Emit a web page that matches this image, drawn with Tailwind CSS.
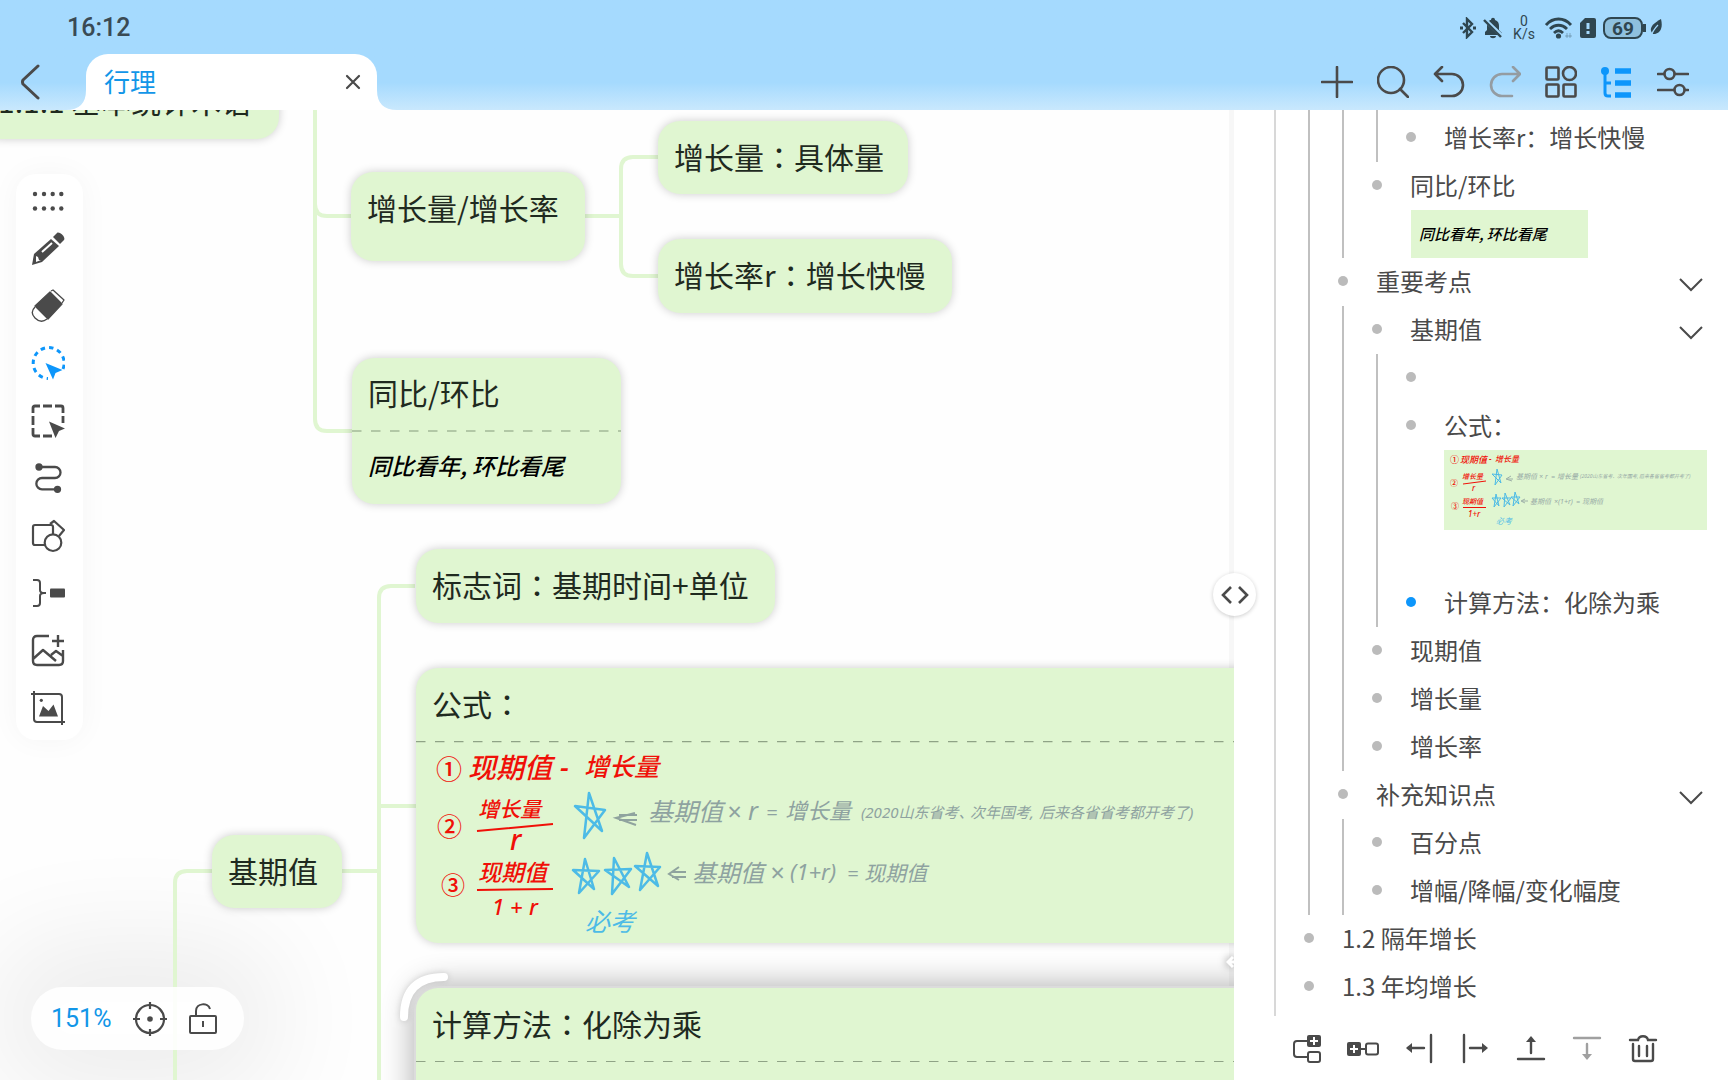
<!DOCTYPE html>
<html lang="zh-CN">
<head>
    <meta charset="UTF-8">
    <meta name="viewport" content="width=device-width, initial-scale=1.0">
    <title>行理</title>
    <script src="https://cdn.jsdelivr.net/npm/@tailwindcss/browser@4"></script>
</head>
<body class="h-screen flex flex-col overflow-hidden bg-white text-[#4a4a4a] font-['Noto_Sans_CJK_SC',sans-serif]">
    <!-- Header -->
    <header class="shrink-0 bg-linear-to-b from-[#a5dafe] from-75% to-[#c9e8fd]">
        <!-- Status bar -->
        <div class="h-[54px] pt-0.5 flex items-center justify-between pl-[67px] pr-[66px] text-[#2f4650]">
            <time class="font-[Roboto,sans-serif] text-[25px] font-medium text-[#3a4a54]">16:12</time>
            <div class="flex items-center gap-[7px]">
                <svg class="w-4 h-[22px]" viewBox="0 0 16 22" fill="none" stroke="currentColor" stroke-width="2.4"><path d="M3 6l9 9-5 5V2l5 5-9 9"/><path d="M0 11h3M13 11h3" stroke-width="3"/></svg>
                <svg class="w-5 h-[22px]" viewBox="0 0 20 22" fill="currentColor"><path d="M2 18V15l2-2V9c0-4 2-6 4-6 0-3 4-3 4 0 3 1 4 3 4 6v4l3 3v2zM7 19h6c0 3-6 3-6 0z"/><path d="M1 2l19 18" stroke="#a5dafe" stroke-width="4"/><path d="M1 3l17 17" stroke="currentColor" stroke-width="2.4"/></svg>
                <div class="w-7 text-center font-[Roboto,sans-serif] text-[14px] leading-[13px]">0<br>K/s</div>
                <svg class="w-7 h-[22px]" viewBox="0 0 28 22" fill="none" stroke="currentColor" stroke-width="2.8"><path d="M1 8C8 0 19 0 26 8M5 12c5-5 12-5 17 0M9 16c3-3 6-3 9 0"/><circle cx="13.500" cy="19" r="2.600" fill="currentColor" stroke="none"/><path d="M20 19h7M22 16v5M25 16v5" stroke-width="1" opacity=".35"/></svg>
                <svg class="w-4 h-5" viewBox="0 0 16 20"><path d="M5 0h9a2 2 0 0 1 2 2v16a2 2 0 0 1-2 2H2a2 2 0 0 1-2-2V5z" fill="currentColor"/><path d="M8 5v6M8 13v3" stroke="#a5dafe" stroke-width="3"/></svg>
                <div class="flex items-center gap-1">
                    <span class="w-10 h-[22px] flex items-center justify-center border-2 border-current rounded-lg bg-[#8fc0de] font-[Roboto,sans-serif] text-[19px] font-bold leading-none">69</span>
                    <span class="w-[3px] h-2 -ml-1 bg-current"></span>
                    <svg class="w-3 h-[18px]" viewBox="0 0 12 18"><path d="M11 0c2 8 0 15-8 15-5-5-1-10 8-15z" fill="currentColor"/><path d="M1 18C2 13 5 9 8 6" stroke="#a5dafe" stroke-width="1.2" fill="none"/></svg>
                </div>
            </div>
        </div>

        <!-- Tabs and actions -->
        <div class="h-14 flex items-center justify-between pl-5 pr-[39px]">
            <div class="flex items-center h-full">
                <button aria-label="返回"><svg class="w-5 h-9" viewBox="0 0 20 36" fill="none" stroke="#4a4a4a" stroke-width="3" stroke-linecap="round" stroke-linejoin="round"><path d="M18 2L3 16q-1 2 0 4l15 14"/></svg></button>
                <div class="flex items-end h-full ml-[26px]">
                    <svg class="w-5 h-5" viewBox="0 0 20 20" fill="#fff"><path d="M20 0Q20 20 0 20H20z"/></svg>
                    <div class="w-[291px] h-full flex items-center justify-between pl-[18px] pr-4 rounded-t-[22px] bg-white">
                        <span class="pb-0.5 text-[26px] leading-8 text-[#1296e8]">行理</span>
                        <button aria-label="关闭"><svg class="w-4 h-4" viewBox="0 0 16 16" stroke="#4a4a4a" stroke-width="2.2" stroke-linecap="round"><path d="M2 2l12 12M14 2L2 14"/></svg></button>
                    </div>
                    <svg class="w-5 h-5" viewBox="0 0 20 20" fill="#fff"><path d="M0 0Q0 20 20 20H0z"/></svg>
                </div>
            </div>
            <div class="flex gap-6">
                <button aria-label="添加"><svg class="w-8 h-8" viewBox="0 0 32 32" stroke="#4a4a4a" stroke-width="2.6" stroke-linecap="round"><path d="M16 1v30M1 16h30"/></svg></button>
                <button aria-label="搜索"><svg class="w-8 h-8" viewBox="0 0 32 32" fill="none" stroke="#4a4a4a" stroke-width="2.6" stroke-linecap="round"><circle cx="14" cy="14" r="13"/><path d="M23 23l8 8"/></svg></button>
                <button aria-label="撤销"><svg class="w-8 h-8" viewBox="0 0 32 32" fill="none" stroke="#4a4a4a" stroke-width="2.6" stroke-linecap="round" stroke-linejoin="round"><path d="M9 1L2 8l7 7M2 8h17a11 11 0 0 1 0 22H9"/></svg></button>
                <button aria-label="重做"><svg class="w-8 h-8" viewBox="0 0 32 32" fill="none" stroke="#949ca2" stroke-width="2.6" stroke-linecap="round" stroke-linejoin="round"><path d="M24 1l7 7-7 7M30 8H13a11 11 0 0 0 0 22h10"/></svg></button>
                <button aria-label="组件"><svg class="w-8 h-8" viewBox="0 0 32 32" fill="none" stroke="#4a4a4a" stroke-width="2.6"><rect x="1.500" y="1.500" width="12" height="12" rx="1"/><circle cx="24.500" cy="7.500" r="6.500"/><rect x="1.500" y="18.500" width="12" height="12" rx="1"/><rect x="18.500" y="18.500" width="12" height="12" rx="1"/></svg></button>
                <button aria-label="大纲"><svg class="w-8 h-8" viewBox="0 0 32 32" fill="none" stroke="#0d96fb" stroke-width="3"><circle cx="4" cy="5" r="4" fill="#0d96fb" stroke="none"/><path d="M4 6v21q0 3 3 3h3M4 17h6"/><path d="M14 5h16M14 17h16M14 29h16" stroke-width="5.400"/></svg></button>
                <button aria-label="设置"><svg class="w-8 h-8" viewBox="0 0 32 32" fill="none" stroke="#4a4a4a" stroke-width="2.6" stroke-linecap="round"><path d="M1 8h6M18 8h13M1 24h16M28 24h3"/><circle cx="12.500" cy="8" r="5"/><circle cx="22.500" cy="24" r="5"/></svg></button>
            </div>
        </div>
    </header>

    <main class="flex flex-1 min-h-0">
        <!-- Mind map canvas -->
        <section class="relative flex-1 overflow-hidden bg-[#fefefe] text-[30px] leading-10 text-[#1f2a1f]">
            <div class="absolute right-0 top-0 w-[5px] h-full bg-[#f7f7f7]"></div>

            <!-- Soft shade behind the zoom pill -->
            <div class="absolute left-14 top-[892px] w-40 h-8 rounded-full shadow-[0_0_110px_60px_rgba(0,0,0,0.07)]"></div>

            <!-- Selected node -->
            <div class="absolute left-[416px] top-[878px] w-[860px] h-40 rounded-t-[22px] bg-[#e0f6d1] shadow-[0_0_0_2px_#dcdcdc,0_0_30px_4px_rgba(0,0,0,0.3)]">
                <h2 class="h-[73px] px-4 pb-1 flex items-center">计算方法<span class="font-['Noto_Sans_CJK_TC']">：</span>化除为乘</h2>
                <svg class="w-full h-px" stroke="#8fa386" stroke-width="2" stroke-dasharray="9.5 9.5"><path d="M0 0h860"/></svg>
            </div>

            <!-- Connectors -->
            <svg class="absolute inset-0 w-full h-full" fill="none" stroke="#e0f6d1" stroke-width="4">
                <path d="M315-4V309Q315 321 327 321H352M315 94Q315 106 327 106H351"/>
                <path d="M585 106H621M658 47H633Q621 47 621 59V154Q621 166 633 166H658"/>
                <path d="M212 761H187Q175 761 175 773V980"/>
                <path d="M342 761H379M415 476H391Q379 476 379 488V980M379 696H416"/>
            </svg>

            <!-- Nodes -->
            <div class="absolute left-[-20px] top-[-45px] w-[299px] h-[74px] px-[18px] pb-1 flex items-center rounded-[22px] bg-[#e0f6d1] shadow-[0_0_10px_rgba(0,0,0,0.2)] whitespace-nowrap">1.1.1 基本统计术语</div>
            <div class="absolute left-[351px] top-[62px] w-[234px] h-[89px] px-4 pb-5 flex items-center rounded-[22px] bg-[#e0f6d1] shadow-[0_0_10px_rgba(0,0,0,0.2)] whitespace-nowrap">增长量/增长率</div>
            <div class="absolute left-[658px] top-[11px] w-[250px] h-[73px] px-4 pb-1 flex items-center rounded-[22px] bg-[#e0f6d1] shadow-[0_0_10px_rgba(0,0,0,0.2)] whitespace-nowrap">增长量<span class="font-['Noto_Sans_CJK_TC']">：</span>具体量</div>
            <div class="absolute left-[658px] top-[129px] w-[294px] h-[74px] px-4 pb-1 flex items-center rounded-[22px] bg-[#e0f6d1] shadow-[0_0_10px_rgba(0,0,0,0.2)] whitespace-nowrap">增长率r<span class="font-['Noto_Sans_CJK_TC']">：</span>增长快慢</div>
            <div class="absolute left-[352px] top-[248px] w-[269px] h-[146px] rounded-[22px] bg-[#e0f6d1] shadow-[0_0_10px_rgba(0,0,0,0.2)]">
                <h2 class="h-[72px] px-4 pb-1 flex items-center">同比/环比</h2>
                <svg class="w-full h-0.5" stroke="#b2c8a6" stroke-width="3" stroke-dasharray="9.5 9.5"><path d="M0 1h269"/></svg>
                <p class="h-[66px] px-4 flex items-center text-[23px] italic font-medium text-black whitespace-nowrap">同比看年, 环比看尾</p>
            </div>
            <div class="absolute left-[416px] top-[439px] w-[359px] h-[74px] px-4 pb-1 flex items-center rounded-[22px] bg-[#e0f6d1] shadow-[0_0_10px_rgba(0,0,0,0.2)] whitespace-nowrap">标志词<span class="font-['Noto_Sans_CJK_TC']">：</span>基期时间+单位</div>
            <div class="absolute left-[212px] top-[725px] w-[130px] h-[73px] px-4 pb-1 flex items-center rounded-[22px] bg-[#e0f6d1] shadow-[0_0_10px_rgba(0,0,0,0.2)] whitespace-nowrap">基期值</div>
            <div class="absolute left-[416px] top-[558px] w-[857px] h-[275px] rounded-[22px] bg-[#e0f6d1] shadow-[0_0_10px_rgba(0,0,0,0.2)]">
                <h2 class="h-[73px] px-4 pb-1 flex items-center">公式<span class="font-['Noto_Sans_CJK_TC']">：</span></h2>
                <!-- Handwritten notes -->
                <svg class="w-full h-[202px] font-['Noto_Sans','Noto_Sans_CJK_SC',sans-serif]" viewBox="0 0 857 202">
                    <path d="M0 0.500h857" stroke="#8fa386" stroke-width="1.500" stroke-dasharray="9.5 9.5"/>
                    <g fill="#f01008" font-style="italic" font-weight="500">
                        <text x="20" y="38" font-size="26" font-style="normal">①</text>
                        <text x="52" y="37" font-size="28">现期值</text>
                        <text x="144" y="36" font-size="28">-</text>
                        <text x="168" y="35" font-size="25">增长量</text>
                        <text x="21" y="95" font-size="25" font-style="normal">②</text>
                        <text x="62" y="76" font-size="21">增长量</text>
                        <text x="94" y="109" font-size="28">r</text>
                        <text x="25" y="153" font-size="24" font-style="normal">③</text>
                        <text x="62" y="140" font-size="23">现期值</text>
                        <text x="76" y="174" font-size="22">1</text>
                        <text x="94" y="174" font-size="22">+</text>
                        <text x="113" y="174" font-size="22">r</text>
                    </g>
                    <path d="M61 90l76-7M61 149l76-1" stroke="#f01008" stroke-width="2"/>
                    <g fill="none" stroke="#4dbbe6" stroke-width="2.500" stroke-linejoin="round">
                        <path d="M168 97l5-45 13 38-27-25 30 4z"/>
                        <path d="M163 152l6-34 9 30-21-19 26 1z"/>
                        <path d="M196 153l2-36 15 29-24-17 26-1z"/>
                        <path d="M224 149l7-37 11 33-23-20 25 1z"/>
                    </g>
                    <text x="169" y="190" font-size="25" font-style="italic" fill="#4dbbe6">必考</text>
                    <g fill="none" stroke="#8fa39e" stroke-width="2">
                        <path d="M219 72l-19 5 20 7M203 74h18M203 79h18"/>
                        <path d="M263 126l-10 7 10 6M256 131h14M256 136h14"/>
                    </g>
                    <g fill="#8ea2a0" font-style="italic">
                        <text x="232" y="80" font-size="25">基期值</text>
                        <text x="311" y="80" font-size="25">×</text>
                        <text x="332" y="79" font-size="25">r</text>
                        <text x="350" y="79" font-size="20">=</text>
                        <text x="369" y="78" font-size="22">增长量</text>
                        <text x="445" y="77" font-size="15">(2020山东省考、</text>
                        <text x="554" y="77" font-size="15">次年国考,</text>
                        <text x="623" y="77" font-size="15">后来各省省考都开考了)</text>
                        <text x="276" y="141" font-size="24">基期值</text>
                        <text x="354" y="141" font-size="25">×</text>
                        <text x="374" y="139" font-size="22">(1+r)</text>
                        <text x="431" y="140" font-size="20">=</text>
                        <text x="448" y="140" font-size="21">现期值</text>
                    </g>
                </svg>
            </div>

            <!-- Selection handles -->
            <svg class="absolute left-[396px] top-[858px] w-14 h-14 drop-shadow-[0_0_3px_rgba(0,0,0,0.15)]" viewBox="0 0 56 56" fill="none" stroke="#fff" stroke-width="8" stroke-linecap="round"><path d="M8 49Q8 9 48 9"/></svg>
            <svg class="absolute right-0 top-[844px] w-2 h-4 drop-shadow-[0_0_4px_rgba(0,0,0,0.5)]" viewBox="0 0 8 16" fill="none" stroke="#fff" stroke-width="3"><path d="M7 3L2 8l5 5M2 8h6"/></svg>

            <!-- Tool palette -->
            <nav class="absolute left-4 top-16 w-[67px] h-[566px] pt-[10px] pb-[15px] pr-1 flex flex-col items-center justify-between rounded-[20px] bg-white shadow-[0_0_30px_rgba(0,0,0,0.04)] text-[#4a4a4a]">
                <button aria-label="移动工具栏"><svg class="w-[34px] h-[34px]" viewBox="0 0 34 34" fill="currentColor"><circle cx="4" cy="10" r="2.200"/><circle cx="13" cy="10" r="2.200"/><circle cx="21.700" cy="10" r="2.200"/><circle cx="30.300" cy="10" r="2.200"/><circle cx="4" cy="24.500" r="2.200"/><circle cx="13" cy="24.500" r="2.200"/><circle cx="21.700" cy="24.500" r="2.200"/><circle cx="30.300" cy="24.500" r="2.200"/></svg></button>
                <div class="h-[494px] flex flex-col justify-between">
                    <button aria-label="画笔"><svg class="w-[34px] h-[34px]" viewBox="0 0 34 34" fill="currentColor"><path d="M20 8l8 7-17 16-10 3 2-11z"/><path d="M22 6l4-4c2-2 9 4 7 7l-4 4z"/><path d="M11 21L21 12" stroke="#fff" stroke-width="2"/><path d="M5 25l2 1 1 3 2 0-5 2z" fill="#fff"/></svg></button>
                    <button aria-label="橡皮擦"><svg class="w-[34px] h-[34px]" viewBox="0 0 34 34" fill="none" stroke="currentColor" stroke-width="1.3" stroke-linejoin="round"><path d="M19 3l12 12-14 15L4 17z" fill="currentColor"/><path d="M4 18c-4 4-3 8 0 11s7 5 12 1M20 2l2-1 11 10-2 3"/></svg></button>
                    <button aria-label="套索选择" class="text-[#0d96fb]"><svg class="w-[34px] h-[34px]" viewBox="0 0 34 34"><path d="M32 23A15.500 15.500 0 1 0 17 32.500" fill="none" stroke="currentColor" stroke-width="3" stroke-dasharray="4.5 4"/><path d="M14.500 17l17 7-7 3-2.500 6.500z" fill="currentColor"/></svg></button>
                    <button aria-label="框选"><svg class="w-[34px] h-[34px]" viewBox="0 0 34 34"><path d="M2 9V4q0-2 2-2h5M12 2h9M24 2h6q2 0 2 2v5M32 12v7M2 12v9M2 24v6q0 2 2 2h5M12 32h9" fill="none" stroke="currentColor" stroke-width="2.800"/><path d="M18 17.500l16 7-6 2.500-3.500 7z" fill="currentColor"/></svg></button>
                    <button aria-label="连线"><svg class="w-[34px] h-[34px]" viewBox="0 0 34 34" fill="none" stroke="currentColor" stroke-width="2.300"><path d="M8 6h16a5.500 5.500 0 0 1 0 11H11a5.600 5.600 0 0 0 0 11.300h15"/><circle cx="8" cy="6" r="2.500" fill="currentColor"/><circle cx="26.500" cy="28.300" r="2.500" fill="currentColor"/></svg></button>
                    <button aria-label="形状"><svg class="w-[34px] h-[34px]" viewBox="0 0 34 34" fill="none" stroke="currentColor" stroke-width="2.200" stroke-linejoin="round"><path d="M14 26H4q-2 0-2-2V8q0-2 2-2h16q2 0 2 2v7M19 5l4-3 10 9-5 6"/><circle cx="22" cy="23.700" r="8.300"/></svg></button>
                    <button aria-label="概要"><svg class="w-[34px] h-[34px]" viewBox="0 0 34 34" fill="none" stroke="currentColor" stroke-width="2"><path d="M2 4h4q3 0 3 3v7q0 3 4 3h2M2 30h4q3 0 3-3v-7q0-3 4-3"/><rect x="19" y="12.500" width="15" height="9" rx="1" fill="currentColor" stroke="none"/></svg></button>
                    <button aria-label="添加图片"><svg class="w-[34px] h-[34px]" viewBox="0 0 34 34" fill="none" stroke="currentColor" stroke-width="2.400" stroke-linejoin="round"><path d="M18 2H6Q2 2 2 6v21q0 4 4 4h22q4 0 4-4V16M27 1v12M21 7h12M2 25l10-9 13 11M20 21l5-4 7 5"/></svg></button>
                    <button aria-label="裁剪图片"><svg class="w-[34px] h-[34px]" viewBox="0 0 34 34" fill="none" stroke="currentColor" stroke-width="2"><path d="M0 3h28q3 0 3 3v28M3 0v28q0 3 3 3h28"/><path d="M8 25.500L12 15l5.500 5 5-6.500L27 25.500z" fill="currentColor" stroke="none"/><circle cx="10.300" cy="9.300" r="1.600" fill="currentColor" stroke="none"/></svg></button>
                </div>
            </nav>

            <!-- Zoom pill -->
            <div class="absolute left-[31px] top-[877px] h-[63px] pl-5 pr-[27px] flex items-center gap-[22px] rounded-full bg-white/90 text-[#4a4a4a]">
                <button class="font-[Roboto,sans-serif] text-[25px] text-[#1296e8]">151%</button>
                <button aria-label="定位中心"><svg class="w-[34px] h-[34px]" viewBox="0 0 34 34" fill="none" stroke="currentColor" stroke-width="2.200"><circle cx="17" cy="17" r="14"/><path d="M17 0v7M17 27v7M0 17h7M27 17h7"/><circle cx="17" cy="17" r="2.800" fill="currentColor" stroke="none"/></svg></button>
                <button aria-label="锁定"><svg class="w-7 h-8" viewBox="0 0 28 32" fill="none" stroke="currentColor" stroke-width="2"><rect x="1" y="13" width="26" height="17" rx="1"/><path d="M7 13V8c0-8 12-9 14-2M14 18v6"/></svg></button>
            </div>
        </section>

        <!-- Outline panel -->
        <aside class="relative w-[494px] shrink-0 flex flex-col bg-white">
            <button aria-label="调整面板宽度" class="absolute -left-[21px] top-[463px] w-[43px] h-[43px] flex items-center justify-center rounded-full bg-white shadow-[0_1px_4px_rgba(0,0,0,0.2)]">
                <svg class="w-7 h-[18px]" viewBox="0 0 28 18" fill="none" stroke="currentColor" stroke-width="2.600"><path d="M10 1L2 9l8 8M18 1l8 8-8 8"/></svg>
            </button>

            <div class="flex-1 min-h-0 overflow-hidden pl-10 text-[24px] leading-8 whitespace-nowrap">
                <ul class="border-l-2 border-[#d8d8d8] pb-[5px]">
                    <li>
                        <ul class="ml-8 border-l-2 border-[#c0c0c0]">
                            <li>
                                <ul class="ml-8 border-l-2 border-[#c0c0c0]">
                                    <li>
                                        <ul class="ml-8 border-l-2 border-[#c0c0c0] pt-1">
                                            <li class="h-12 pb-0.5 flex items-center gap-[28px] pl-7"><i class="size-[10px] rounded-full bg-[#bbb]"></i>增长率r：增长快慢</li>
                                        </ul>
                                    </li>
                                    <li>
                                        <div class="h-12 pb-0.5 flex items-center gap-[28px] pl-7"><i class="size-[10px] rounded-full bg-[#bbb]"></i>同比/环比</div>
                                        <div class="ml-[67px] w-[177px] h-12 px-2 flex items-center bg-[#e0f6d1] text-[15px] italic font-medium text-black">同比看年, 环比看尾</div>
                                    </li>
                                </ul>
                            </li>
                            <li>
                                <div class="h-12 pb-0.5 flex items-center gap-[28px] pl-7 pr-[25px]"><i class="size-[10px] rounded-full bg-[#bbb]"></i>重要考点
                                    <button aria-label="收起重要考点" class="ml-auto mt-2"><svg class="w-6 h-[14px]" viewBox="0 0 24 14" fill="none" stroke="currentColor" stroke-width="2"><path d="M1 1l11 11L23 1"/></svg></button>
                                </div>
                                <ul class="ml-8 border-l-2 border-[#c0c0c0]">
                                    <li>
                                        <div class="h-12 pb-0.5 flex items-center gap-[28px] pl-7 pr-[25px]"><i class="size-[10px] rounded-full bg-[#bbb]"></i>基期值
                                            <button aria-label="收起基期值" class="ml-auto mt-2"><svg class="w-6 h-[14px]" viewBox="0 0 24 14" fill="none" stroke="currentColor" stroke-width="2"><path d="M1 1l11 11L23 1"/></svg></button>
                                        </div>
                                        <ul class="ml-8 border-l-2 border-[#c0c0c0]">
                                            <li class="h-12 pb-0.5 flex items-center pl-7"><i class="size-[10px] rounded-full bg-[#bbb]"></i></li>
                                            <li>
                                                <div class="h-12 pb-0.5 flex items-center gap-[28px] pl-7"><i class="size-[10px] rounded-full bg-[#bbb]"></i>公式：</div>
                                                <svg class="ml-[66px] mb-[49px] w-[263px] h-20 bg-[#e0f6d1] font-['Noto_Sans','Noto_Sans_CJK_SC',sans-serif]" viewBox="0 0 263 80">
                                                    <g fill="#f01008" font-style="italic" font-weight="500">
                                                        <text x="6" y="13" font-size="9" font-style="normal">①</text>
                                                        <text x="16" y="13" font-size="9">现期值</text>
                                                        <text x="45" y="12" font-size="8">-</text>
                                                        <text x="51" y="12" font-size="8">增长量</text>
                                                        <text x="6" y="36" font-size="8" font-style="normal">②</text>
                                                        <text x="18" y="29" font-size="7">增长量</text>
                                                        <text x="28" y="41" font-size="8">r</text>
                                                        <text x="7" y="59" font-size="8" font-style="normal">③</text>
                                                        <text x="18" y="54" font-size="7">现期值</text>
                                                        <text x="24" y="67" font-size="8">1+r</text>
                                                    </g>
                                                    <path d="M19 34l23-3M19 57.500h23" stroke="#f01008"/>
                                                    <g fill="none" stroke="#4dbbe6">
                                                        <path d="M51 35l2-16 4 14-9-9 10 1z"/>
                                                        <path d="M50 57l2-13 3 12-7-8h9z"/>
                                                        <path d="M60 57l1-14 5 12-8-7h9z"/>
                                                        <path d="M69 56l2-14 4 12-8-7h9z"/>
                                                    </g>
                                                    <text x="52" y="74" font-size="8" font-style="italic" fill="#4dbbe6">必考</text>
                                                    <path d="M67 26l-5 3 6 2M63 29h6M81 49l-4 2 4 2M78 51h6" fill="none" stroke="#9db0a8"/>
                                                    <g fill="#96a9a5" font-style="italic">
                                                        <text x="72" y="29" font-size="7">基期值</text>
                                                        <text x="95" y="29" font-size="7">×</text>
                                                        <text x="101" y="29" font-size="7">r</text>
                                                        <text x="107" y="29" font-size="7">=</text>
                                                        <text x="113" y="29" font-size="7">增长量</text>
                                                        <text x="136" y="28" font-size="5">(2020山东省考、</text>
                                                        <text x="173" y="28" font-size="5">次年国考,</text>
                                                        <text x="195" y="28" font-size="5">后来各省省考都开考了)</text>
                                                        <text x="86" y="54" font-size="7">基期值</text>
                                                        <text x="110" y="54" font-size="7">×(1+r)</text>
                                                        <text x="132" y="54" font-size="7">=</text>
                                                        <text x="138" y="54" font-size="7">现期值</text>
                                                    </g>
                                                </svg>
                                            </li>
                                            <li class="h-12 pb-0.5 flex items-center gap-[28px] pl-7"><i class="size-[10px] rounded-full bg-[#0d96fb]"></i>计算方法：化除为乘</li>
                                        </ul>
                                    </li>
                                    <li class="h-12 pb-0.5 flex items-center gap-[28px] pl-7"><i class="size-[10px] rounded-full bg-[#bbb]"></i>现期值</li>
                                    <li class="h-12 pb-0.5 flex items-center gap-[28px] pl-7"><i class="size-[10px] rounded-full bg-[#bbb]"></i>增长量</li>
                                    <li class="h-12 pb-0.5 flex items-center gap-[28px] pl-7"><i class="size-[10px] rounded-full bg-[#bbb]"></i>增长率</li>
                                </ul>
                            </li>
                            <li>
                                <div class="h-12 pb-0.5 flex items-center gap-[28px] pl-7 pr-[25px]"><i class="size-[10px] rounded-full bg-[#bbb]"></i>补充知识点
                                    <button aria-label="收起补充知识点" class="ml-auto mt-2"><svg class="w-6 h-[14px]" viewBox="0 0 24 14" fill="none" stroke="currentColor" stroke-width="2"><path d="M1 1l11 11L23 1"/></svg></button>
                                </div>
                                <ul class="ml-8 border-l-2 border-[#c0c0c0]">
                                    <li class="h-12 pb-0.5 flex items-center gap-[28px] pl-7"><i class="size-[10px] rounded-full bg-[#bbb]"></i>百分点</li>
                                    <li class="h-12 pb-0.5 flex items-center gap-[28px] pl-7"><i class="size-[10px] rounded-full bg-[#bbb]"></i>增幅/降幅/变化幅度</li>
                                </ul>
                            </li>
                        </ul>
                    </li>
                    <li class="h-12 pb-0.5 flex items-center gap-[28px] pl-7"><i class="size-[10px] rounded-full bg-[#bbb]"></i>1.2 隔年增长</li>
                    <li class="h-12 pb-0.5 flex items-center gap-[28px] pl-7"><i class="size-[10px] rounded-full bg-[#bbb]"></i>1.3 年均增长</li>
                </ul>
            </div>

            <!-- Outline actions -->
            <div class="h-[63px] shrink-0 flex items-center gap-6 pl-[57px]">
                <button aria-label="添加同级"><svg class="w-8 h-8" viewBox="0 0 32 32" fill="none" stroke="currentColor" stroke-width="2"><path d="M17 8H6q-3 0-3 3v10q0 3 3 3h11"/><rect x="16" y="2" width="14" height="12" rx="2" fill="currentColor" stroke="none"/><rect x="17" y="19" width="12" height="10" rx="2"/><path d="M23 4v8M19 8h8" stroke="#fff"/></svg></button>
                <button aria-label="添加子级"><svg class="w-8 h-8" viewBox="0 0 32 32" fill="none" stroke="currentColor" stroke-width="2"><path d="M13 16h7"/><rect x="0" y="9" width="14" height="14" rx="2" fill="currentColor" stroke="none"/><rect x="19" y="10.500" width="12" height="11" rx="2"/><path d="M7 12v8M3 16h8" stroke="#fff"/></svg></button>
                <button aria-label="减少缩进"><svg class="w-8 h-8" viewBox="0 0 32 32" fill="none" stroke="currentColor" stroke-width="2.400" stroke-linecap="round"><path d="M28 2v27M5 15h16"/><path d="M3 15l6-5v10z" fill="currentColor" stroke="none"/></svg></button>
                <button aria-label="增加缩进"><svg class="w-8 h-8" viewBox="0 0 32 32" fill="none" stroke="currentColor" stroke-width="2.400" stroke-linecap="round"><path d="M5 2v27M11 15h15"/><path d="M29 15l-6-5v10z" fill="currentColor" stroke="none"/></svg></button>
                <button aria-label="上移"><svg class="w-8 h-8" viewBox="0 0 32 32" fill="none" stroke="currentColor" stroke-width="2.400" stroke-linecap="round"><path d="M3 26h26M16 20V6"/><path d="M16 3l5 6H11z" fill="currentColor" stroke="none"/></svg></button>
                <button aria-label="下移" class="text-[#a0a0a0]"><svg class="w-8 h-8" viewBox="0 0 32 32" fill="none" stroke="currentColor" stroke-width="2.400" stroke-linecap="round"><path d="M3 5h26M16 11v13"/><path d="M16 27l5-6H11z" fill="currentColor" stroke="none"/></svg></button>
                <button aria-label="删除"><svg class="w-8 h-8" viewBox="0 0 32 32" fill="none" stroke="currentColor" stroke-width="2.400" stroke-linecap="round"><path d="M3 7h8c1-5 9-5 10 0h8M6 11v15q0 2 2 2h16q2 0 2-2V11M12 13v10M20 13v10"/></svg></button>
            </div>
        </aside>
    </main>
</body>
</html>
